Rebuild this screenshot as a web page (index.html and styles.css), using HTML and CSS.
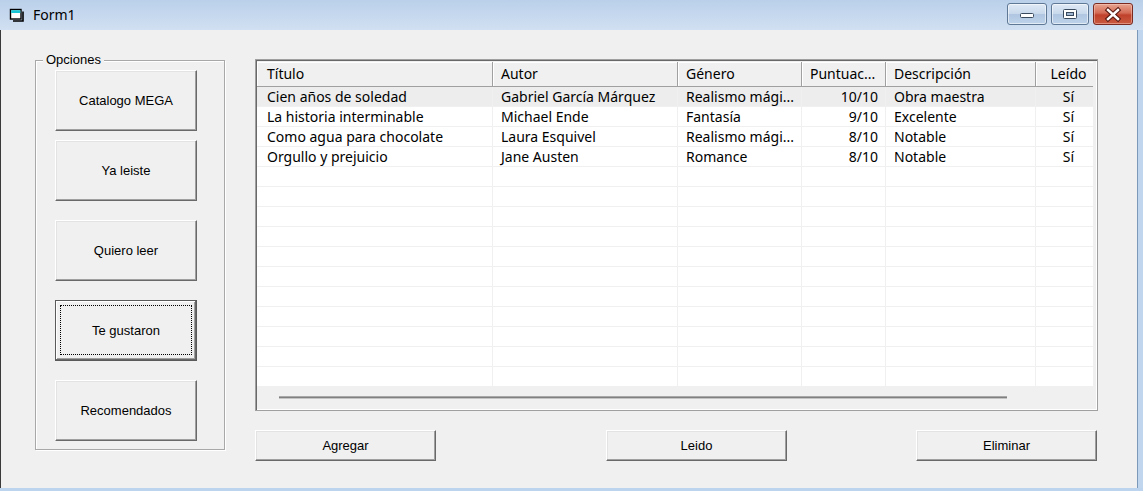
FILE: index.html
```html
<!DOCTYPE html>
<html lang="es">
<head>
<meta charset="utf-8">
<title>Form1</title>
<link rel="stylesheet" href="styles.css">
</head>
<body>
<div class="window">
  <div class="titlebar">
    <svg class="app-icon" width="16" height="16" viewBox="0 0 16 16">
      <path d="M14 4.5 V14 H4" fill="none" stroke="#000" stroke-width="1.6"/>
      <rect x="1.5" y="2.5" width="10.5" height="9.5" fill="#fff" stroke="#000" stroke-width="1.4"/>
      <rect x="2.2" y="3.2" width="9.1" height="2.8" fill="#19c6d6"/>
    </svg>
    <span class="title">Form1</span>
    <div class="caption-btns">
      <div class="cap cap-min">
        <svg width="40" height="22" viewBox="0 0 40 22"><rect x="13.5" y="10.5" width="13" height="4" rx="1" fill="#fff" stroke="#3a4a5e"/></svg>
      </div>
      <div class="cap cap-max">
        <svg width="38" height="22" viewBox="0 0 38 22"><rect x="12.5" y="6.5" width="13" height="9" rx="1" fill="#fff" stroke="#3a4a5e"/><rect x="15.5" y="9.5" width="7" height="3" fill="#9fb6d2" stroke="#3a4a5e"/></svg>
      </div>
      <div class="cap cap-close">
        <svg width="40" height="22" viewBox="0 0 40 22"><path d="M15 7 L25 16 M25 7 L15 16" stroke="#5a1a12" stroke-width="4.6" stroke-linecap="square"/><path d="M15 7 L25 16 M25 7 L15 16" stroke="#fff" stroke-width="2.4" stroke-linecap="square"/></svg>
      </div>
    </div>
  </div>
  <div class="frame">
    <div class="client">
      <div class="group">
        <span class="legend">Opciones</span>
        <div class="btn side first">Catalogo MEGA</div>
        <div class="btn side second">Ya leiste</div>
        <div class="btn side">Quiero leer</div>
        <div class="btn side focused">Te gustaron</div>
        <div class="btn side">Recomendados</div>
      </div>
      <div class="main">
        <div class="list">
          <div class="lv-inner">
            <div class="lv-head">
              <div class="hc c1">Título</div>
              <div class="hc">Autor</div>
              <div class="hc">Género</div>
              <div class="hc">Puntuac...</div>
              <div class="hc">Descripción</div>
              <div class="hc center">Leído</div>
            </div>
            <div class="lv-row sel">
              <div class="cell c1">Cien años de soledad</div>
              <div class="cell">Gabriel García Márquez</div>
              <div class="cell">Realismo mági...</div>
              <div class="cell right">10/10</div>
              <div class="cell">Obra maestra</div>
              <div class="cell center">Sí</div>
            </div>
            <div class="lv-row">
              <div class="cell c1">La historia interminable</div>
              <div class="cell">Michael Ende</div>
              <div class="cell">Fantasía</div>
              <div class="cell right">9/10</div>
              <div class="cell">Excelente</div>
              <div class="cell center">Sí</div>
            </div>
            <div class="lv-row">
              <div class="cell c1">Como agua para chocolate</div>
              <div class="cell">Laura Esquivel</div>
              <div class="cell">Realismo mági...</div>
              <div class="cell right">8/10</div>
              <div class="cell">Notable</div>
              <div class="cell center">Sí</div>
            </div>
            <div class="lv-row">
              <div class="cell c1">Orgullo y prejuicio</div>
              <div class="cell">Jane Austen</div>
              <div class="cell">Romance</div>
              <div class="cell right">8/10</div>
              <div class="cell">Notable</div>
              <div class="cell center">Sí</div>
            </div>
            <div class="lv-row"><div class="cell"></div><div class="cell"></div><div class="cell"></div><div class="cell"></div><div class="cell"></div><div class="cell"></div></div>
            <div class="lv-row"><div class="cell"></div><div class="cell"></div><div class="cell"></div><div class="cell"></div><div class="cell"></div><div class="cell"></div></div>
            <div class="lv-row"><div class="cell"></div><div class="cell"></div><div class="cell"></div><div class="cell"></div><div class="cell"></div><div class="cell"></div></div>
            <div class="lv-row"><div class="cell"></div><div class="cell"></div><div class="cell"></div><div class="cell"></div><div class="cell"></div><div class="cell"></div></div>
            <div class="lv-row"><div class="cell"></div><div class="cell"></div><div class="cell"></div><div class="cell"></div><div class="cell"></div><div class="cell"></div></div>
            <div class="lv-row"><div class="cell"></div><div class="cell"></div><div class="cell"></div><div class="cell"></div><div class="cell"></div><div class="cell"></div></div>
            <div class="lv-row"><div class="cell"></div><div class="cell"></div><div class="cell"></div><div class="cell"></div><div class="cell"></div><div class="cell"></div></div>
            <div class="lv-row"><div class="cell"></div><div class="cell"></div><div class="cell"></div><div class="cell"></div><div class="cell"></div><div class="cell"></div></div>
            <div class="lv-row"><div class="cell"></div><div class="cell"></div><div class="cell"></div><div class="cell"></div><div class="cell"></div><div class="cell"></div></div>
            <div class="lv-row"><div class="cell"></div><div class="cell"></div><div class="cell"></div><div class="cell"></div><div class="cell"></div><div class="cell"></div></div>
            <div class="lv-row"><div class="cell"></div><div class="cell"></div><div class="cell"></div><div class="cell"></div><div class="cell"></div><div class="cell"></div></div>
          </div>
          <div class="lv-scroll"><div class="lv-thumb"></div></div>
        </div>
        <div class="actions">
          <div class="btn wide">Agregar</div>
          <div class="btn wide leido">Leido</div>
          <div class="btn wide eliminar">Eliminar</div>
        </div>
      </div>
    </div>
    <div class="frame-right"></div>
  </div>
  <div class="frame-bottom"></div>
</div>
</body>
</html>
```

FILE: styles.css
```css
* { box-sizing: border-box; }

html, body {
  margin: 0;
  padding: 0;
}

body {
  width: 1143px;
  height: 491px;
  overflow: hidden;
  background: #f0f0f0;
}

.window {
  display: flex;
  flex-direction: column;
  width: 1143px;
  height: 491px;
}

/* ---------- title bar ---------- */
.titlebar {
  height: 30px;
  flex: none;
  display: flex;
  align-items: flex-start;
  padding-left: 9px;
  background: linear-gradient(#bad0ea, #d1e0f2);
}

.app-icon {
  margin-top: 7px;
  flex: none;
}

.title {
  margin-left: 8px;
  margin-top: 6px;
  font-family: "Noto Sans", sans-serif;
  font-size: 14px;
  line-height: 18px;
  color: #000;
}

.caption-btns {
  margin-left: auto;
  margin-right: 10px;
  margin-top: 3px;
  display: flex;
  gap: 4px;
}

.cap {
  height: 22px;
  border: 1px solid #5e7896;
  border-radius: 3px;
  overflow: hidden;
  display: flex;
  align-items: center;
  justify-content: center;
  box-shadow: inset 0 0 0 1px rgba(255, 255, 255, 0.55);
  background: linear-gradient(#dfe9f5 0%, #c9d9ec 48%, #b0c6e1 52%, #bed3ea 100%);
}

.cap svg { display: block; flex: none; }

.cap-min { width: 40px; }
.cap-max { width: 38px; }
.cap-close {
  width: 40px;
  border-color: #7a2a20;
  box-shadow: inset 0 0 0 1px rgba(255, 210, 200, 0.45);
  background: linear-gradient(#e7a491 0%, #d36b55 45%, #c0412b 55%, #c95a41 100%);
}

/* ---------- frame ---------- */
.frame {
  flex: 1;
  display: flex;
  min-height: 0;
}

.client {
  flex: 1;
  display: flex;
  align-items: flex-start;
  border-left: 1px solid #3a3a3a;
  background: #f0f0f0;
}

.frame-right {
  width: 6px;
  flex: none;
  background: #c0d6ee;
  border-left: 1px solid #7d99ba;
}

.frame-bottom {
  height: 3px;
  flex: none;
  background: #bcd4ee;
}

/* ---------- buttons ---------- */
.btn {
  display: flex;
  align-items: center;
  justify-content: center;
  font-family: "Liberation Sans", Arial, sans-serif;
  font-size: 13px;
  color: #000;
  background: #f0f0f0;
  border: 1px solid;
  border-color: #ffffff #696969 #696969 #ffffff;
  box-shadow: inset -1px -1px 0 #a0a0a0, inset 1px 1px 0 #e3e3e3;
}

/* ---------- group box ---------- */
.group {
  position: relative;
  margin-left: 34px;
  margin-top: 30px;
  width: 190px;
  height: 390px;
  border: 1px solid #a8a8a8;
  box-shadow: inset 1px 1px 0 #fff, 1px 1px 0 #fff;
  padding: 9px 0 0 19px;
  display: flex;
  flex-direction: column;
}

.legend {
  position: absolute;
  left: 7px;
  top: -9px;
  padding: 0 3px 0 3px;
  background: #f0f0f0;
  font-family: "Liberation Sans", Arial, sans-serif;
  font-size: 13px;
  line-height: 15px;
  color: #000;
}

.side {
  width: 142px;
  height: 61px;
  flex: none;
  margin-bottom: 19px;
}

.side.first { margin-bottom: 9px; }

.focused {
  position: relative;
  border: 1px solid #5a5a5a;
  box-shadow: inset -1px -1px 0 #696969, inset 1px 1px 0 #fff, inset -2px -2px 0 #a0a0a0;
}

.focused::after {
  content: "";
  position: absolute;
  left: 4px;
  top: 4px;
  right: 4px;
  bottom: 5px;
  border: 1px dotted #000;
}

/* ---------- main column ---------- */
.main {
  margin-left: 30px;
  margin-top: 29px;
  display: flex;
  flex-direction: column;
}

.list {
  width: 843px;
  height: 352px;
  border: 1px solid #a0a0a0;
  box-shadow: inset 1px 1px 0 #696969, inset -1px -1px 0 #fff;
  padding: 2px 4px 1px 1px;
  background: #f0f0f0;
  display: flex;
  flex-direction: column;
}

.lv-inner {
  overflow: hidden;
  background: #fff;
  display: flex;
  flex-direction: column;
  font-family: "Noto Sans", sans-serif;
  font-size: 14px;
  color: #000;
}

.lv-head,
.lv-row {
  display: grid;
  grid-template-columns: 236px 185px 124px 84px 150px 66px;
  width: 845px;
}

.lv-head {
  height: 25px;
  background: #f0f0f0;
}

.hc {
  height: 25px;
  line-height: 24px;
  padding: 0 7px 0 8px;
  white-space: nowrap;
  overflow: hidden;
  border-right: 1px solid #a0a0a0;
  border-bottom: 1px solid #a0a0a0;
  box-shadow: inset 1px 1px 0 #fff;
}

.lv-row {
  height: 20px;
  border-bottom: 1px solid #f0f0f0;
}

.lv-row.sel { background: #ededed; }

.cell {
  height: 19px;
  line-height: 20px;
  padding: 0 7px 0 8px;
  white-space: nowrap;
  overflow: hidden;
  border-right: 1px solid #f0f0f0;
}

.c1 { padding-left: 10px; }
.right { text-align: right; }
.center { text-align: center; padding: 0; }

.lv-scroll {
  flex: 1;
  background: #f0f0f0;
  padding-top: 9px;
  padding-left: 22px;
}

.lv-thumb {
  width: 728px;
  height: 3px;
  background: #808080;
  border-top: 1px solid #a8a8a8;
  border-bottom: 1px solid #c4c4c4;
}

/* ---------- bottom actions ---------- */
.actions {
  margin-top: 19px;
  display: flex;
}

.wide {
  width: 181px;
  height: 31px;
}

.leido { margin-left: 170px; }
.eliminar { margin-left: 129px; }
```
